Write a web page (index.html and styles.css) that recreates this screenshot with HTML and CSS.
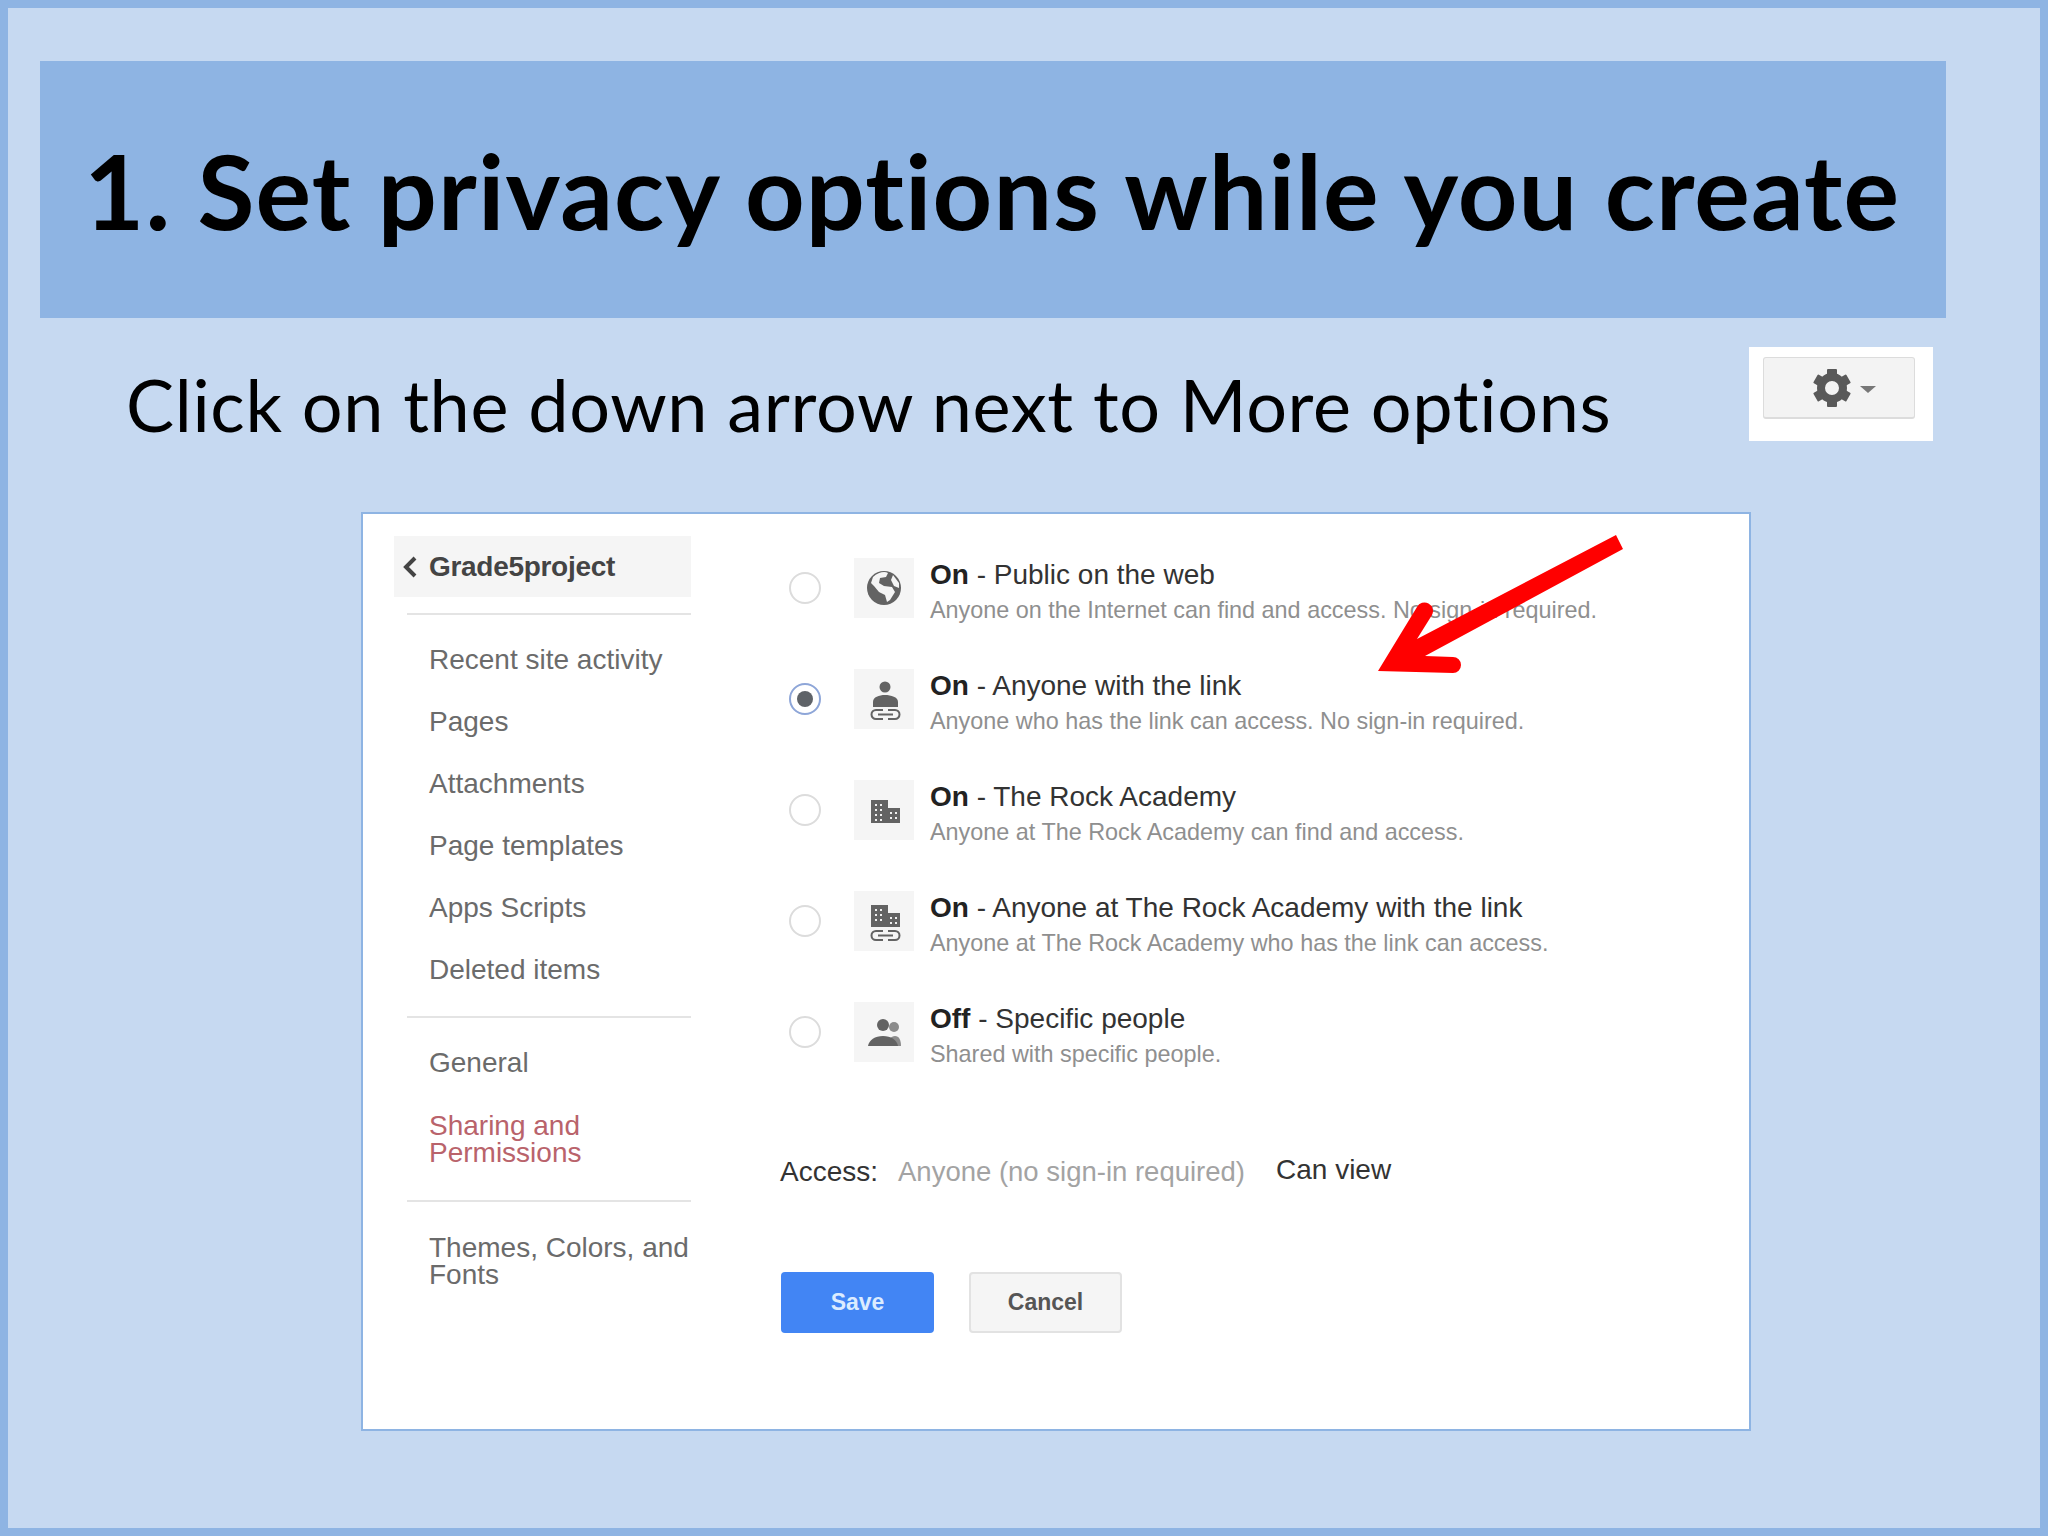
FILE: index.html
```html
<!DOCTYPE html>
<html lang="en">
<head>
    <meta charset="UTF-8">
    <title>Set privacy options while you create</title>
    <link rel="stylesheet" href="styles.css">
</head>
<body>
    <div class="slide">
        <div class="title-band">
            <h1>1. Set privacy options while you create</h1>
        </div>

        <div class="sub-row">
            <p class="sub-text">Click on the down arrow next to More options</p>
            <div class="gear-shot">
                <div class="gear-button">
                    <svg class="gear-icon" viewBox="0 0 40 40" width="40" height="40">
                        <g fill="#595959">
                            <path fill-rule="evenodd" d="M20 5a15 15 0 1 0 0 30a15 15 0 1 0 0-30zM20 13a7 7 0 1 1 0 14a7 7 0 1 1 0-14z"/>
                            <rect x="15" y="1" width="10" height="8" rx="1"/>
                            <rect x="15" y="31" width="10" height="8" rx="1"/>
                            <rect x="15" y="1" width="10" height="8" rx="1" transform="rotate(60 20 20)"/>
                            <rect x="15" y="1" width="10" height="8" rx="1" transform="rotate(120 20 20)"/>
                            <rect x="15" y="1" width="10" height="8" rx="1" transform="rotate(240 20 20)"/>
                            <rect x="15" y="1" width="10" height="8" rx="1" transform="rotate(300 20 20)"/>
                        </g>
                    </svg>
                    <span class="caret"></span>
                </div>
            </div>
        </div>

        <div class="card">
            <div class="sidebar">
                <div class="side-head">
                    <svg class="chevron" viewBox="0 0 16 24" width="16" height="24"><path d="M13 3L4 12l9 9" fill="none" stroke="#444" stroke-width="4"/></svg>
                    Grade5project
                </div>
                <div class="side-line first"></div>
                <div class="nav-item">Recent site activity</div>
                <div class="nav-item">Pages</div>
                <div class="nav-item">Attachments</div>
                <div class="nav-item">Page templates</div>
                <div class="nav-item">Apps Scripts</div>
                <div class="nav-item">Deleted items</div>
                <div class="side-line"></div>
                <div class="nav-item">General</div>
                <div class="nav-item wrap active">Sharing and<br>Permissions</div>
                <div class="side-line"></div>
                <div class="nav-item wrap last">Themes, Colors, and<br>Fonts</div>
            </div>

            <div class="main">
                <div class="option">
                    <span class="radio"></span>
                    <div class="opt-icon">
                        <svg viewBox="0 0 60 60" width="60" height="60">
                            <circle cx="30" cy="30" r="17" fill="#636363"/>
                            <path d="M19 19c5-5 12-6 15-4l-2 4-6 1-1 5 5 3 8 1 3 5-5 8-3 2-2-7-6-3-5-6-3-3z" fill="#f5f5f5"/>
                            <path d="M39 17l6 8 0 5-5-2-3-6z" fill="#f5f5f5"/>
                        </svg>
                    </div>
                    <div class="opt-text">
                        <div class="opt-title"><b>On</b> - Public on the web</div>
                        <div class="opt-desc">Anyone on the Internet can find and access. No sign-in required.</div>
                    </div>
                </div>
                <div class="option">
                    <span class="radio checked"></span>
                    <div class="opt-icon">
                        <svg viewBox="0 0 60 60" width="60" height="60">
                            <circle cx="31" cy="18" r="5.500" fill="#636363"/>
                            <path d="M19 38v-5c0-5 6-7 12-7s13 2 13 7v5z" fill="#636363"/>
                            <path d="M29 41h-7a4.500 4.500 0 0 0 0 9h7M34 41h7a4.500 4.500 0 0 1 0 9h-7M24 45.500h15" fill="none" stroke="#636363" stroke-width="2"/>
                        </svg>
                    </div>
                    <div class="opt-text">
                        <div class="opt-title"><b>On</b> - Anyone with the link</div>
                        <div class="opt-desc">Anyone who has the link can access. No sign-in required.</div>
                    </div>
                </div>
                <div class="option">
                    <span class="radio"></span>
                    <div class="opt-icon">
                        <svg viewBox="0 0 60 60" width="60" height="60">
                            <path d="M17 20h17v8h12v15H17z" fill="#636363"/>
                            <path d="M21 24h2v2h-2zM26 24h2v2h-2zM21 29h2v2h-2zM26 29h2v2h-2zM21 34h2v2h-2zM26 34h2v2h-2zM21 39h2v2h-2zM26 39h2v2h-2zM36 32h2v2h-2zM41 32h2v2h-2zM36 37h2v2h-2zM41 37h2v2h-2z" fill="#f0f0f0"/>
                        </svg>
                    </div>
                    <div class="opt-text">
                        <div class="opt-title"><b>On</b> - The Rock Academy</div>
                        <div class="opt-desc">Anyone at The Rock Academy can find and access.</div>
                    </div>
                </div>
                <div class="option">
                    <span class="radio"></span>
                    <div class="opt-icon">
                        <svg viewBox="0 0 60 60" width="60" height="60">
                            <path d="M17 14h17v8h12v14H17z" fill="#636363"/>
                            <path d="M21 18h2v2h-2zM26 18h2v2h-2zM21 23h2v2h-2zM26 23h2v2h-2zM21 28h2v2h-2zM26 28h2v2h-2zM36 26h2v2h-2zM41 26h2v2h-2zM36 31h2v2h-2zM41 31h2v2h-2z" fill="#f0f0f0"/>
                            <path d="M29 40h-7a4.500 4.500 0 0 0 0 9h7M34 40h7a4.500 4.500 0 0 1 0 9h-7M24 44.500h15" fill="none" stroke="#636363" stroke-width="2"/>
                        </svg>
                    </div>
                    <div class="opt-text">
                        <div class="opt-title"><b>On</b> - Anyone at The Rock Academy with the link</div>
                        <div class="opt-desc">Anyone at The Rock Academy who has the link can access.</div>
                    </div>
                </div>
                <div class="option">
                    <span class="radio"></span>
                    <div class="opt-icon">
                        <svg viewBox="0 0 60 60" width="60" height="60">
                            <circle cx="40" cy="25" r="5" fill="#8c8c8c"/>
                            <path d="M34 44c0-6 3-10 7-10s6 4 6 10z" fill="#8c8c8c"/>
                            <circle cx="29" cy="23" r="6" fill="#636363"/>
                            <path d="M14 44c1-6 7-10 15-10s14 4 15 10z" fill="#636363"/>
                        </svg>
                    </div>
                    <div class="opt-text">
                        <div class="opt-title"><b>Off</b> - Specific people</div>
                        <div class="opt-desc">Shared with specific people.</div>
                    </div>
                </div>

                <div class="access-row">
                    <span class="access-label">Access:</span>
                    <span class="access-value">Anyone (no sign-in required)</span>
                    <span class="access-perm">Can view</span>
                </div>

                <div class="btn-row">
                    <div class="btn save">Save</div>
                    <div class="btn cancel">Cancel</div>
                </div>
            </div>

            <!-- red callout arrow pasted over the screenshot -->
            <svg class="callout" viewBox="0 0 260 150" width="260" height="150">
                <path d="M8 141L47 77A8.500 8.500 0 0 1 62 85L47 109L246 5L253 19L55 126L83 127A8 8 0 0 1 83 143Z" fill="#ff0000"/>
            </svg>
        </div>
    </div>
</body>
</html>
```

FILE: styles.css
```css
body {
    margin: 0;
    font-family: "Liberation Sans", Arial, sans-serif;
}
.slide {
    box-sizing: border-box;
    width: 2048px;
    height: 1536px;
    padding: 53px 94px 0 32px;
    border: 8px solid #8eb4e3;
    background: #c6d9f1;
}
.title-band {
    display: flex;
    align-items: center;
    height: 257px;
    padding-left: 44px;
    background: #8eb4e3;
}
.title-band h1 {
    margin: 0;
    font-family: Lato, sans-serif;
    font-size: 104px;
    font-weight: 700;
    font-variant-ligatures: none;
    letter-spacing: 1.1px;
    line-height: 1;
    color: #000;
    white-space: nowrap;
}
.sub-row {
    display: flex;
    align-items: center;
    height: 94px;
    margin-top: 29px;
    padding-left: 86px;
}
.sub-text {
    margin: 0;
    padding-top: 20px;
    font-family: Lato, sans-serif;
    font-size: 72px;
    font-variant-ligatures: none;
    letter-spacing: 0.66px;
    line-height: 1;
    color: #000;
    white-space: nowrap;
}
.gear-shot {
    box-sizing: border-box;
    width: 184px;
    height: 94px;
    margin-left: auto;
    margin-right: 13px;
    padding: 10px 18px 22px 14px;
    background: #fff;
}
.gear-button {
    box-sizing: border-box;
    display: flex;
    align-items: center;
    justify-content: center;
    height: 62px;
    padding-left: 9px;
    border: 1px solid #dcdcdc;
    border-bottom-width: 2px;
    border-radius: 3px;
    background: #f3f3f3;
}
.gear-icon { margin-right: 8px; }
.caret {
    width: 0;
    height: 0;
    margin-top: 4px;
    border-left: 8px solid transparent;
    border-right: 8px solid transparent;
    border-top: 7px solid #777;
}
.card {
    box-sizing: border-box;
    position: relative;
    display: flex;
    width: 1390px;
    height: 919px;
    margin: 71px 0 0 321px;
    border: 2px solid #8eb4e3;
    background: #fff;
}
.sidebar {
    flex: none;
    width: 297px;
    margin: 22px 0 0 31px;
    font-size: 28px;
    color: #6b6b6b;
}
.side-head {
    display: flex;
    align-items: center;
    gap: 11px;
    height: 61px;
    padding-left: 8px;
    background: #f5f5f5;
    font-weight: 700;
    letter-spacing: -0.3px;
    color: #444;
}
.side-line {
    height: 2px;
    margin: 15px 0 14px 13px;
    background: #e4e4e4;
}
.side-line.first { margin-top: 16px; }
.nav-item {
    padding-left: 35px;
    line-height: 62px;
}
.nav-item.wrap {
    margin: 18px 0 34px;
    line-height: 27px;
}
.nav-item.last { margin-top: 32px; }
.nav-item.active { color: #b9636b; }
.main {
    flex: 1;
    padding: 18px 0 0 89px;
}
.option {
    display: flex;
    align-items: center;
    height: 111px;
    padding-left: 9px;
}
.radio {
    box-sizing: border-box;
    flex: none;
    display: flex;
    align-items: center;
    justify-content: center;
    width: 32px;
    height: 32px;
    margin-right: 33px;
    border: 2px solid #dcdcdc;
    border-radius: 50%;
}
.radio.checked { border-color: #8ea6d8; }
.radio.checked::after {
    content: "";
    width: 16px;
    height: 16px;
    border-radius: 50%;
    background: #5f6368;
}
.opt-icon {
    flex: none;
    width: 60px;
    height: 60px;
    margin-right: 16px;
    background: #f5f5f5;
}
.opt-icon svg { display: block; }
.opt-text { padding-top: 10px; }
.opt-title {
    font-size: 28px;
    line-height: 36px;
    color: #333;
    white-space: nowrap;
}
.opt-title b { color: #222; }
.opt-desc {
    font-size: 23.4px;
    line-height: 35px;
    color: #8f8f8f;
    white-space: nowrap;
}
.access-row {
    display: flex;
    align-items: baseline;
    margin-top: 65px;
    font-size: 28px;
    line-height: 40px;
    white-space: nowrap;
}
.access-label {
    width: 118px;
    color: #333;
}
.access-value {
    width: 378px;
    font-size: 27.5px;
    color: #a3a3a3;
}
.access-perm {
    position: relative;
    top: -2px;
    color: #333;
}
.btn-row {
    display: flex;
    gap: 35px;
    margin: 80px 0 0 1px;
}
.btn {
    box-sizing: border-box;
    display: flex;
    align-items: center;
    justify-content: center;
    width: 153px;
    height: 61px;
    border-radius: 4px;
    font-size: 23px;
    font-weight: 700;
}
.btn.save {
    background: #4285f4;
    color: #dcecff;
}
.btn.cancel {
    border: 2px solid #e2e2e2;
    background: #f5f5f5;
    color: #555;
}
.callout {
    position: absolute;
    left: 1007px;
    top: 16px;
}
```
